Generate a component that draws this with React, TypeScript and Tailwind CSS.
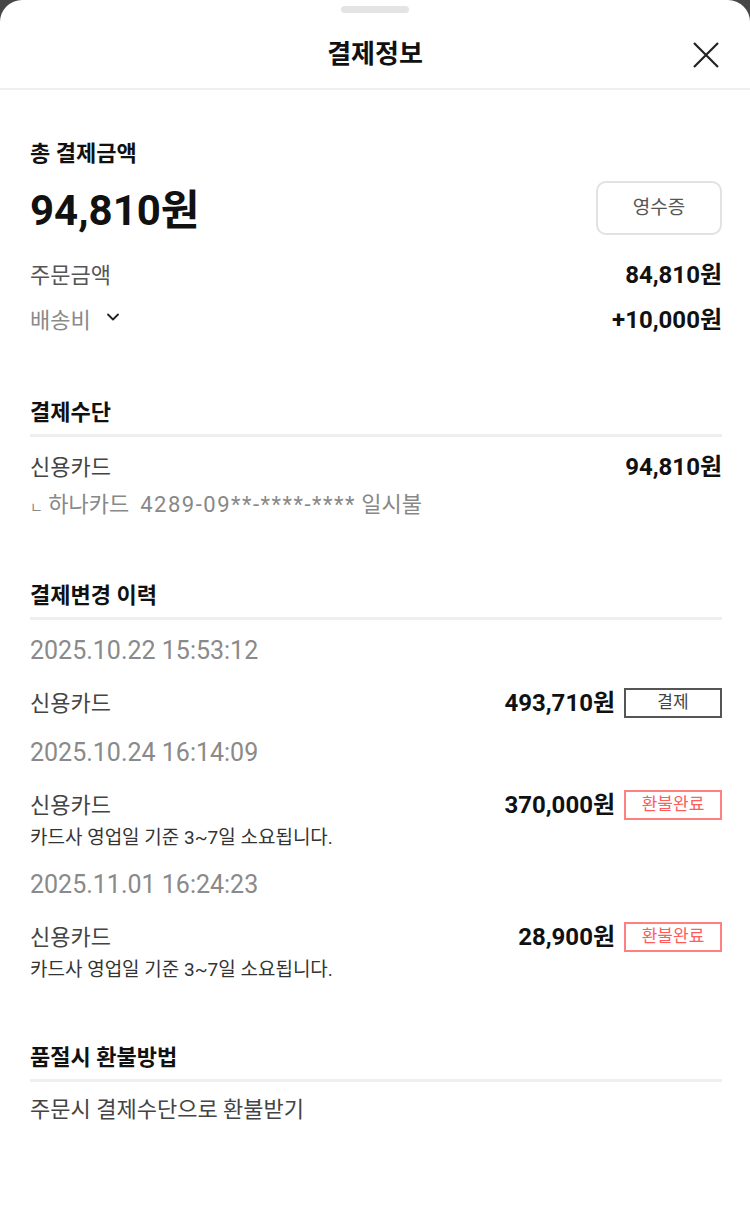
import { ChevronDown } from "lucide-react";

const font = { fontFamily: 'Roboto, "Noto Sans CJK KR", sans-serif' };

type History = {
  date: string;
  amount: string;
  status: "pay" | "refund";
};

const history: History[] = [
  { date: "2025.10.22 15:53:12", amount: "493,710원", status: "pay" },
  { date: "2025.10.24 16:14:09", amount: "370,000원", status: "refund" },
  { date: "2025.11.01 16:24:23", amount: "28,900원", status: "refund" },
];

function SectionTitle({ children }: { children: React.ReactNode }) {
  return (
    <div>
      <h2 className="text-[22px] font-bold leading-[28px] text-[#111]">{children}</h2>
      <div className="mt-[7px] h-[3px] bg-[#efefef]" />
    </div>
  );
}

function Badge({ status }: { status: History["status"] }) {
  if (status === "pay") {
    return (
      <span className="flex h-[30px] w-[98px] items-center justify-center border-2 border-[#555] text-[17px] text-[#444]">
        결제
      </span>
    );
  }
  return (
    <span className="flex h-[30px] w-[98px] items-center justify-center border-2 border-[#ff8080] text-[17px] text-[#ff5c5c]">
      환불완료
    </span>
  );
}

export default function App() {
  return (
    <div className="min-h-[1231px] bg-[#474747]" style={font}>
      <div className="min-h-[1231px] rounded-t-[22px] bg-white">
        {/* Handle */}
        <div className="flex h-[20px] justify-center pt-[6px]">
          <div className="h-[7px] w-[68px] rounded-full bg-[#e4e4e4]" />
        </div>

        {/* Header */}
        <div className="relative flex h-[70px] items-center justify-center border-b-2 border-[#f0f0f0]">
          <h1 className="text-[26px] font-bold text-[#111]">결제정보</h1>
          <button className="absolute right-[30px] top-[21px] h-[28px] w-[28px]">
            <svg viewBox="0 0 28 28" width="28" height="28" fill="none" stroke="#222" strokeWidth="2.2">
              <path d="M2 2 L26 26 M26 2 L2 26" />
            </svg>
          </button>
        </div>

        <div className="pl-[30px] pr-[28px]">
          {/* Total */}
          <div className="pt-[50px]">
            <p className="text-[22px] font-bold leading-[28px] text-[#111]">총 결제금액</p>
            <div className="mt-[13px] flex items-center justify-between">
              <p className="mt-[6px] text-[42px] font-bold leading-[48px] text-[#111]">94,810원</p>
              <button className="flex h-[54px] w-[126px] items-center justify-center rounded-[10px] border-2 border-[#e2e2e2] text-[19px] text-[#555]">
                영수증
              </button>
            </div>
            <div className="mt-[25px] flex h-[30px] items-center justify-between">
              <span className="text-[22px] text-[#555]">주문금액</span>
              <span className="text-[24px] font-bold text-[#111]">84,810원</span>
            </div>
            <div className="mt-[15px] flex h-[30px] items-center justify-between">
              <span className="flex items-center gap-[12px] text-[22px] text-[#8a8a8a]">
                배송비
                <ChevronDown size={20} strokeWidth={2.2} className="-mt-[6px] text-[#222]" />
              </span>
              <span className="text-[24px] font-bold text-[#111]">+10,000원</span>
            </div>
          </div>

          {/* Payment method */}
          <div className="mt-[64px]">
            <SectionTitle>결제수단</SectionTitle>
            <div className="mt-[15px] flex h-[30px] items-center justify-between">
              <span className="text-[22px] text-[#444]">신용카드</span>
              <span className="text-[24px] font-bold text-[#111]">94,810원</span>
            </div>
            <p className="mt-[8px] h-[30px] text-[22px] leading-[30px] text-[#888]">
              <span className="text-[14px]">ㄴ</span> 하나카드&nbsp;{" "}
              <span className="tracking-[1.5px]">4289-09**-****-****</span> 일시불
            </p>
          </div>

          {/* History */}
          <div className="mt-[62px]">
            <SectionTitle>결제변경 이력</SectionTitle>
            <div className="pt-[15px]">
              {history.map((h, i) => (
                <div key={i} className={i > 0 ? "mt-[19px]" : ""}>
                  <p className="text-[25px] leading-[32px] text-[#8a8a8a]">{h.date}</p>
                  <div className="mt-[21px] flex h-[30px] items-center justify-between">
                    <span className="text-[22px] text-[#444]">신용카드</span>
                    <div className="flex items-center gap-[9px]">
                      <span className="text-[24px] font-bold text-[#111]">{h.amount}</span>
                      <Badge status={h.status} />
                    </div>
                  </div>
                  {h.status === "refund" && (
                    <p className="mt-[6px] text-[19px] leading-[24px] text-[#333]">
                      카드사 영업일 기준 3~7일 소요됩니다.
                    </p>
                  )}
                </div>
              ))}
            </div>
          </div>

          {/* Sold out refund */}
          <div className="mt-[62px]">
            <SectionTitle>품절시 환불방법</SectionTitle>
            <p className="mt-[13px] text-[22px] leading-[30px] text-[#444]">주문시 결제수단으로 환불받기</p>
          </div>
        </div>
      </div>
    </div>
  );
}
